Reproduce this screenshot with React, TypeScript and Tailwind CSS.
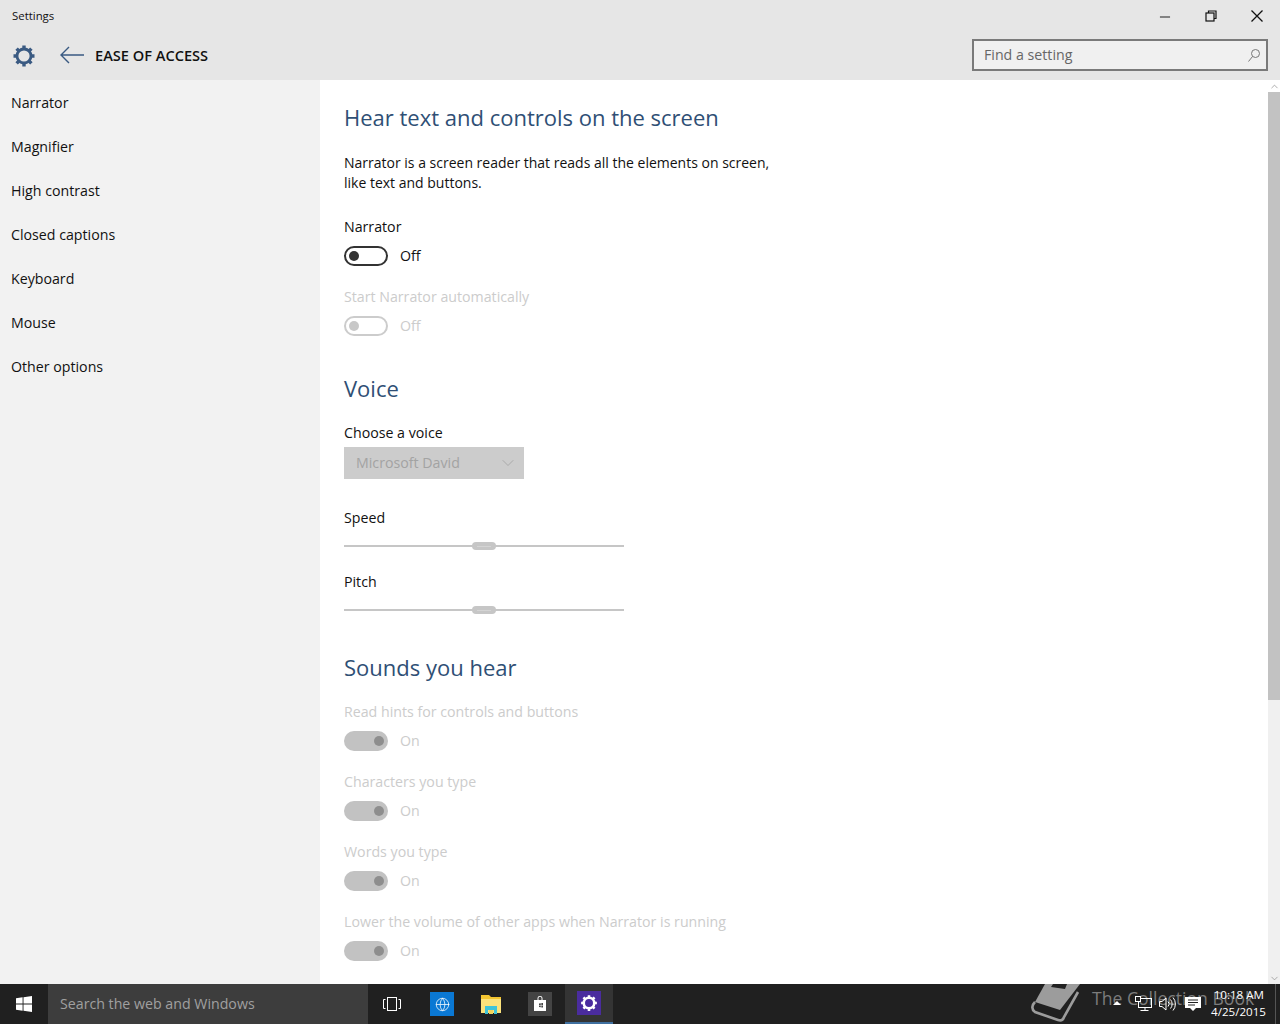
import { Minus, ChevronDown, ChevronUp, Globe } from "lucide-react";

const font = "font-['Open_Sans','Noto_Sans',sans-serif]";
const body = "text-[14.2px] leading-[20px]";

const navItems = ["Narrator", "Magnifier", "High contrast", "Closed captions", "Keyboard", "Mouse", "Other options"];

const soundItems = [
  { label: "Read hints for controls and buttons", mt: "mt-[19px]" },
  { label: "Characters you type", mt: "mt-[21px]" },
  { label: "Words you type", mt: "mt-[21px]" },
  { label: "Lower the volume of other apps when Narrator is running", mt: "mt-[21px]" },
];

function SectionTitle({ children, className }: { children: string; className: string }) {
  return <h2 className={`text-[22px] leading-[32px] text-[#2f4f75] ${className}`}>{children}</h2>;
}

function Slider({ label, className }: { label: string; className: string }) {
  return (
    <div className={className}>
      <div className={`${body} text-[#111]`}>{label}</div>
      <div className="relative mt-[17px] h-[2px] w-[280px] bg-[#c6c6c6]">
        <div className="absolute left-[128px] top-[-3px] flex h-[8px] w-[24px] items-center justify-center rounded-full bg-[#c6c6c6]">
          <div className="h-px w-[14px] bg-[#d4d4d4]" />
        </div>
      </div>
    </div>
  );
}

function OffToggle({ disabled }: { disabled?: boolean }) {
  return (
    <div className="mt-[9px] flex items-center">
      <div className={`flex h-[20px] w-[44px] items-center rounded-full border-2 pl-[3px] ${disabled ? "border-[#cccccc]" : "border-[#333333]"}`}>
        <div className={`h-[10px] w-[10px] rounded-full ${disabled ? "bg-[#c8c8c8]" : "bg-[#333333]"}`} />
      </div>
      <span className={`ml-[12px] ${body} ${disabled ? "text-[#cccccc]" : "text-[#111]"}`}>Off</span>
    </div>
  );
}

function OnToggle({ label, mt }: { label: string; mt: string }) {
  return (
    <div className={mt}>
      <div className={`${body} text-[#cccccc]`}>{label}</div>
      <div className="mt-[9px] flex items-center">
        <div className="flex h-[20px] w-[44px] items-center justify-end rounded-full bg-[#c2c2c2] pr-[4px]">
          <div className="h-[10px] w-[10px] rounded-full bg-[#8e8e8e]" />
        </div>
        <span className={`ml-[12px] ${body} text-[#cccccc]`}>On</span>
      </div>
    </div>
  );
}

// plain eight-tooth gear used in the header and on the taskbar
function Gear({ size, color, ring }: { size: number; color: string; ring: number }) {
  return (
    <svg width={size} height={size} viewBox="0 0 24 24" fill="none" stroke={color}>
      <circle cx="12" cy="12" r="7" strokeWidth={ring} />
      <path
        d="M12 1.5V5M12 19V22.5M1.5 12H5M19 12H22.5M4.6 4.6 7 7M17 17 19.4 19.4M19.4 4.6 17 7M7 17 4.6 19.4"
        strokeWidth="3.4"
      />
    </svg>
  );
}

function WindowsLogo() {
  return (
    <svg width="16" height="16" viewBox="0 0 16 16" fill="#ffffff">
      <path d="M0 2.3 6.6 1.3V7.6H0ZM7.5 1.2 16 0V7.6H7.5ZM0 8.5H6.6V14.7L0 13.7ZM7.5 8.5H16V16L7.5 14.8Z" />
    </svg>
  );
}

function TaskView() {
  return (
    <svg width="18" height="14" viewBox="0 0 18 14" fill="none" stroke="#ffffff" strokeWidth="1">
      <rect x="4.5" y="0.5" width="9" height="13" />
      <path d="M2.5 2.5H0.5V11.5H2.5M15.5 2.5H17.5V11.5H15.5" />
    </svg>
  );
}

function FolderIcon() {
  return (
    <svg width="24" height="24" viewBox="0 0 24 24">
      <path d="M2 3H10L12 5H22V21H2Z" fill="#f3c531" />
      <path d="M2 7H22V21H2Z" fill="#fbe27b" />
      <path d="M6 14H18V22H15V18H9V22H6Z" fill="#3fc4d8" />
      <rect x="10" y="18" width="4" height="4" fill="#f3d35a" />
    </svg>
  );
}

function StoreIcon() {
  return (
    <div className="flex h-[24px] w-[24px] items-center justify-center bg-[#444444]">
      <svg width="14" height="16" viewBox="0 0 14 16">
        <path d="M5 4V2.2a2 2 0 0 1 4 0V4" fill="none" stroke="#ffffff" strokeWidth="1" />
        <path d="M1 4H13V15H1Z" fill="#ffffff" />
        <path d="M6 7.5 7.8 7.2V9H6ZM8.3 7.1 10 6.9V9H8.3ZM6 9.5H7.8V11.3L6 11ZM8.3 9.5H10V11.6L8.3 11.4Z" fill="#444444" />
      </svg>
    </div>
  );
}

function BookIcon() {
  return (
    <svg width="52" height="40" viewBox="0 0 52 40">
      <path d="M16 0H51L31 26 6 18Z" fill="#9c9c9c" />
      <path d="M24 0H38L36 5 22 3Z" fill="#222222" />
      <path d="M6 18C3 21 2 25 6 28L29 36C32 37 34 36 35 33L49 8" fill="none" stroke="#9c9c9c" strokeWidth="2.6" />
    </svg>
  );
}

function NetworkIcon() {
  return (
    <svg width="17" height="16" viewBox="0 0 17 16" fill="none" stroke="#ffffff" strokeWidth="1">
      <rect x="3.5" y="2.5" width="13" height="9" />
      <path d="M10 11.5V14.5M5.5 14.5H13.5" />
      <rect x="0.5" y="0.5" width="5" height="5" fill="#222222" />
    </svg>
  );
}

function VolumeIcon() {
  return (
    <svg width="17" height="16" viewBox="0 0 17 16" fill="none" stroke="#ffffff" strokeWidth="1">
      <path d="M0.5 5.5H3L7 2V14L3 10.5H0.5Z" />
      <path d="M9 5.5a3.5 3.5 0 0 1 0 5M11.5 3.5a7 7 0 0 1 0 9M14 1.5a10 10 0 0 1 0 13" />
    </svg>
  );
}

function ActionCenter() {
  return (
    <svg width="16" height="16" viewBox="0 0 16 16">
      <path d="M0 1H16V12H11L8 15 5 12H0Z" fill="#ffffff" />
      <path d="M3 4H13M3 6.5H13M3 9H10" stroke="#222222" strokeWidth="1" />
    </svg>
  );
}

export default function App() {
  return (
    <div className={`flex h-[1024px] w-[1280px] flex-col overflow-hidden bg-white ${font}`}>
      <div className="h-[80px] shrink-0 bg-[#e6e6e6]">
        <div className="flex h-[32px] items-center">
          <span className="ml-[12px] text-[11.4px] leading-[32px] text-[#111]">Settings</span>
          <div className="ml-auto flex items-center">
            <div className="flex w-[46px] justify-center"><Minus size={16} strokeWidth={1.4} className="mt-[1px] text-[#111]" /></div>
            <div className="flex w-[46px] justify-center">
              <svg width="12" height="12" viewBox="0 0 12 12" fill="none" stroke="#111111" strokeWidth="1.2">
                <rect x="1" y="3" width="8" height="8" />
                <path d="M3.5 3V1H11V8.5H9" />
              </svg>
            </div>
            <div className="flex w-[46px] justify-center">
              <svg width="12" height="12" viewBox="0 0 12 12" stroke="#111111" strokeWidth="1.3">
                <path d="M0.5 0.5 11.5 11.5M11.5 0.5 0.5 11.5" />
              </svg>
            </div>
          </div>
        </div>
        <div className="flex h-[48px] items-center">
          <div className="ml-[12px]"><Gear size={24} color="#3a5a82" ring={2.8} /></div>
          <svg width="24" height="18" viewBox="0 0 24 18" fill="none" stroke="#3a5a82" strokeWidth="1.4" className="ml-[24px] mt-[-2px]">
            <path d="M24 9H1M9 1 1 9 9 17" />
          </svg>
          <span className="ml-[11px] mt-[-2px] text-[14.6px] font-semibold leading-[20px] text-[#111]">EASE OF ACCESS</span>
          <div className="ml-auto mr-[12px] mt-[-2px] flex h-[32px] w-[296px] items-center border-2 border-[#7a7a7a] bg-[#f0f0f0] pl-[10px] pr-[6px]">
            <span className={`${body} text-[#666666]`}>Find a setting</span>
            <svg width="12" height="13" viewBox="0 0 12 13" fill="none" stroke="#777777" strokeWidth="1" className="ml-auto">
              <circle cx="7.5" cy="4.5" r="4" />
              <path d="M4.6 7.4 0.5 12.5" />
            </svg>
          </div>
        </div>
      </div>

      <div className="flex min-h-0 flex-1">
        <nav className={`w-[320px] shrink-0 bg-[#f2f2f2] pl-[11px] pt-px ${body}`}>
          {navItems.map((item) => (
            <div key={item} className="flex h-[44px] items-center text-[#111]">{item}</div>
          ))}
        </nav>

        <main className="min-w-0 flex-1 pl-[24px] pt-[21px]">
          <SectionTitle className="">Hear text and controls on the screen</SectionTitle>
          <p className="mt-[20px] text-[14px] leading-[20px] text-[#111]">
            Narrator is a screen reader that reads all the elements on screen,
            <br />
            like text and buttons.
          </p>
          <div className={`mt-[24px] ${body} text-[#111]`}>Narrator</div>
          <OffToggle />
          <div className={`mt-[21px] ${body} text-[#cccccc]`}>Start Narrator automatically</div>
          <OffToggle disabled />

          <SectionTitle className="mt-[36px]">Voice</SectionTitle>
          <div className={`mt-[19px] ${body} text-[#111]`}>Choose a voice</div>
          <div className="mt-[4px] flex h-[32px] w-[180px] items-center bg-[#cccccc] pl-[12px] pr-[6px]">
            <span className={`${body} text-[#a3a3a3]`}>Microsoft David</span>
            <ChevronDown size={20} strokeWidth={1} className="ml-auto text-[#a3a3a3]" />
          </div>
          <Slider label="Speed" className="mt-[29px]" />
          <Slider label="Pitch" className="mt-[25px]" />

          <SectionTitle className="mt-[40px]">Sounds you hear</SectionTitle>
          {soundItems.map((s) => (
            <OnToggle key={s.label} label={s.label} mt={s.mt} />
          ))}
        </main>

        <div className="flex w-[12px] shrink-0 flex-col bg-[#f0f0f0]">
          <div className="flex h-[12px] items-center justify-center bg-white"><ChevronUp size={11} strokeWidth={1.5} className="text-[#8a8a8a]" /></div>
          <div className="h-[608px] bg-[#c2c2c2]" />
          <div className="flex-1" />
          <div className="flex h-[12px] items-center justify-center"><ChevronDown size={11} strokeWidth={1.5} className="text-[#8a8a8a]" /></div>
        </div>
      </div>

      <div className="relative flex h-[40px] shrink-0 items-center bg-[#202020]">
        <div className="flex w-[48px] justify-center"><WindowsLogo /></div>
        <div className="flex h-full w-[320px] items-center bg-[#3d3d3d] pl-[12px] text-[14.2px] text-[#a0a0a0]">Search the web and Windows</div>
        <div className="flex h-full w-[48px] items-center justify-center"><TaskView /></div>
        <div className="ml-[2px] flex h-full w-[48px] items-center justify-center">
          <div className="flex h-[24px] w-[24px] items-center justify-center bg-[#0a78d4]"><Globe size={15} strokeWidth={1.2} className="text-white" /></div>
        </div>
        <div className="flex h-full w-[49px] items-center justify-center"><FolderIcon /></div>
        <div className="flex h-full w-[49px] items-center justify-center"><StoreIcon /></div>
        <div className="ml-px flex h-full w-[48px] items-center justify-center border-b-2 border-[#3f6f9f] bg-[#343434]">
          <div className="flex h-[24px] w-[24px] items-center justify-center bg-[#4a2c9e]"><Gear size={18} color="#ffffff" ring={3.4} /></div>
        </div>

        <div className="absolute left-[1029px] top-0 h-[40px] w-[52px]"><BookIcon /></div>
        <span className="absolute left-[1092px] top-[1px] whitespace-nowrap text-[17.6px] leading-[26px] text-[#7c7c7c]">The Collection Book</span>

        <div className="absolute left-[1113px] top-[17px] h-0 w-0 border-x-[4px] border-b-[4px] border-x-transparent border-b-white" />
        <div className="absolute left-[1135px] top-[12px]"><NetworkIcon /></div>
        <div className="absolute left-[1159px] top-[12px]"><VolumeIcon /></div>
        <div className="absolute left-[1185px] top-[12px]"><ActionCenter /></div>
        <div className="absolute left-[1206px] top-[2px] w-[60px] text-right text-[11.6px] leading-[17px] text-white">
          <div className="pr-[2px]">10:18 AM</div>
          <div>4/25/2015</div>
        </div>
        <div className="absolute right-[4px] top-0 h-[40px] w-px bg-[#555555]" />
      </div>
    </div>
  );
}
